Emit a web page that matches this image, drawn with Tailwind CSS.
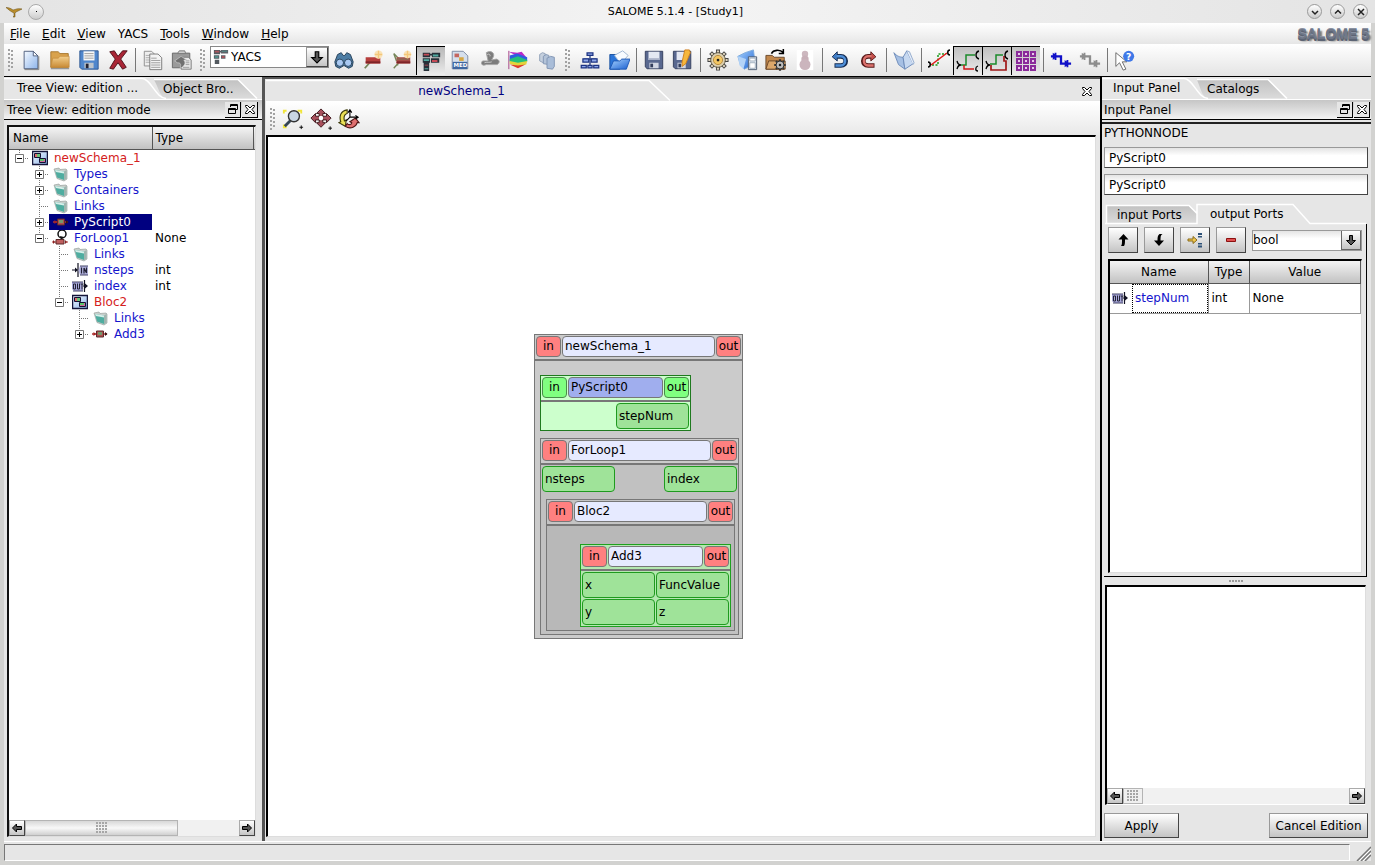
<!DOCTYPE html>
<html lang="en">
<head>
<meta charset="utf-8">
<title>SALOME 5.1.4 - [Study1]</title>
<script src="https://cdn.jsdelivr.net/npm/@tailwindcss/browser@4"></script>
</head>
<body class="relative flex h-screen flex-col overflow-hidden bg-[#e6e6e6] font-['DejaVu_Sans',sans-serif] text-xs leading-4 text-black">

<svg class="absolute size-0" aria-hidden="true">
  <defs>
    <linearGradient id="gBlue" x1="0" y1="0" x2="1" y2="1"><stop offset="0" stop-color="#f4f9ff"/><stop offset="1" stop-color="#8db4ea"/></linearGradient>
    <linearGradient id="gFolder" x1="0" y1="0" x2="0" y2="1"><stop offset="0" stop-color="#f3cf8c"/><stop offset="1" stop-color="#c98b36"/></linearGradient>
    <linearGradient id="gSky" x1="0" y1="0" x2="1" y2="1"><stop offset="0" stop-color="#a9d4ff"/><stop offset="1" stop-color="#1a5fd0"/></linearGradient>
    <linearGradient id="gTab" x1="0" y1="0" x2="0" y2="1"><stop offset="0" stop-color="#c2c2c2"/><stop offset="1" stop-color="#dadada"/></linearGradient>
    <pattern id="dots" width="3" height="4" patternUnits="userSpaceOnUse"><rect width="2" height="2" fill="#9a9a9a"/></pattern>
    <pattern id="cells" width="3" height="3" patternUnits="userSpaceOnUse"><rect width="2" height="2" fill="#a6a6a6"/></pattern>

    <symbol id="t-line" viewBox="0 0 20 16"><path d="M10.500 0V16M12 8.500H20" stroke="#777" stroke-dasharray="1 1" fill="none"/></symbol>
    <symbol id="t-plus" viewBox="0 0 20 16"><path d="M10.500 0V16M12 8.500H20" stroke="#777" stroke-dasharray="1 1" fill="none"/><path d="M6.500 4.500h8v8h-8z" fill="#fff" stroke="#777"/><path d="M8 8.500h5M10.500 6v5" stroke="#000"/></symbol>
    <symbol id="t-plusend" viewBox="0 0 20 16"><path d="M10.500 0V9M12 8.500H20" stroke="#777" stroke-dasharray="1 1" fill="none"/><path d="M6.500 4.500h8v8h-8z" fill="#fff" stroke="#777"/><path d="M8 8.500h5M10.500 6v5" stroke="#000"/></symbol>
    <symbol id="t-minus" viewBox="0 0 20 16"><path d="M10.500 0V9M12 8.500H20" stroke="#777" stroke-dasharray="1 1" fill="none"/><path d="M6.500 4.500h8v8h-8z" fill="#fff" stroke="#777"/><path d="M8 8.500h5" stroke="#000"/></symbol>

    <symbol id="i-bloc" viewBox="0 0 16 16"><path d="M.500 1.500h15v13H.500z" fill="url(#gBlue)" stroke="#15153a" stroke-width="1.500"/><path d="M2.500 3.500h6v4h-6z" fill="#e06c6c" stroke="#113"/><path d="M5 4h3v3H5z" fill="#6cc47a"/><path d="M7.500 8.500h6v4h-6z" fill="#d06c9c" stroke="#113"/><path d="M8 9h4v2H8z" fill="#5cc46a"/></symbol>
    <symbol id="i-folder" viewBox="0 0 16 16"><path d="M1 3l5-1 1 1.500 6-.500 1 1v9l-3 2-7-2.500z" fill="#c9cfcc" stroke="#8d9894" stroke-width=".6"/><path d="M2 4l9 1.500V14l-7-2.500z" fill="#4fada0"/><path d="M2 4l9 1.500v2L3 6z" fill="#d7efea"/><path d="M11 5.500l2.500-1.500v8.500L11 14.500z" fill="#9fb5af"/></symbol>
    <symbol id="i-node" viewBox="0 0 16 16"><path d="M0 8h4M12 8h3" stroke="#a33" stroke-width="1.300"/><path d="M1.500 6L4 8l-2.500 2z" fill="#a22"/><path d="M13 6l2.500 2-2.500 2z" fill="#311"/><path d="M4.500 5h7v6h-7z" fill="#b05050" stroke="#5a2b2b"/><path d="M6 6h4v3H6z" fill="#74996e"/></symbol>
    <symbol id="i-loop" viewBox="0 0 16 16"><circle cx="10" cy="4" r="4" fill="none" stroke="#111" stroke-width="1.500"/><path d="M8 6l4 1-3 3z" fill="#111"/><path d="M0 12h4M13 12h3" stroke="#a33"/><path d="M4 9.500h8v4.500H4z" fill="#c06060" stroke="#5a2b2b"/><path d="M1 10l2 2-2 2zM13 10l2 2-2 2z" fill="#822"/></symbol>
    <symbol id="i-in" viewBox="0 0 16 16"><path d="M0 8h5M6 1v14" stroke="#112" stroke-width="1.200"/><path d="M3 5.500L6 8l-3 2.500z" fill="#112"/><path d="M8 4h8v9H8L6.500 8.500z" fill="#b4b4e0"/><path d="M9.500 5.500v6M12 11.500V6l2.500 5V5.500" stroke="#223" stroke-width="1.200" fill="none"/><path d="M8 13h8M8 4h8" stroke="#446"/></symbol>
    <symbol id="i-out" viewBox="0 0 16 16"><path d="M0 4h11v9H2L0 11z" fill="#a8a8dc"/><path d="M1.500 6h2v5h-2zM5.500 5.500V11h2V5.500M8.500 6h3M10 6v5.500" stroke="#223" fill="none"/><path d="M1 13h10M0 4h11" stroke="#446"/><path d="M12.500 2v12M11 8h4" stroke="#112" stroke-width="1.200"/><path d="M13 5.500L16 8l-3 2.500z" fill="#112"/></symbol>
    <symbol id="i-close" viewBox="0 0 12 12"><path d="M1.500 2.500h2L6 5l2.500-2.500h2v1L8 6.500l2.500 3v1h-2L6 8l-2.500 2.500h-2v-1l2.500-3-2.500-3z" fill="#fff" stroke="#000"/></symbol>
    <symbol id="i-float" viewBox="0 0 12 12"><path d="M3.500 1.500h7v5h-2M3.500 1.500V4M3 2.500h8M1.500 5.500h7v5h-7zM1 6.500h8" fill="none" stroke="#000"/></symbol>
    <symbol id="i-left" viewBox="0 0 12 12"><path d="M1.500 6l4-4V4.500H10.500v3H5.500V10z" fill="#555" stroke="#000"/></symbol>
    <symbol id="i-right" viewBox="0 0 12 12"><path d="M10.500 6l-4-4V4.500H1.500v3h5V10z" fill="#555" stroke="#000"/></symbol>
    <symbol id="i-down" viewBox="0 0 12 12"><path d="M6 11L1.500 6.500h3V1.500h3v5h3z" fill="#555" stroke="#000"/></symbol>
    <symbol id="i-grip" viewBox="0 0 6 22"><path d="M0 0h2v2H0zM3 1h2v2H3zM0 4h2v2H0zM3 5h2v2H3zM0 8h2v2H0zM3 9h2v2H3zM0 12h2v2H0zM3 13h2v2H3zM0 16h2v2H0zM3 17h2v2H3zM0 20h2v2H0z" fill="#a2a2a2"/></symbol>
    <symbol id="i-gear" viewBox="0 0 24 24"><g stroke="#444" stroke-width="4.400"><path d="M12 .500v23M.500 12h23M3.900 3.900l16.200 16.200M20.100 3.900L3.900 20.100"/></g><g stroke="#ddd3bd" stroke-width="2.400"><path d="M12 1.500v21M1.500 12h21M4.600 4.600l14.800 14.800M19.400 4.600L4.600 19.400"/></g><circle cx="12" cy="12" r="8" fill="#ddd0b0" stroke="#55503f"/><circle cx="12" cy="12" r="5" fill="#f3c763" stroke="#b58a3c"/><circle cx="12" cy="12" r="1.500" fill="#222"/></symbol>
    <symbol id="i-graygear" viewBox="0 0 24 24"><g stroke="#333" stroke-width="4.400"><path d="M12 .500v23M.500 12h23M3.900 3.900l16.200 16.200M20.100 3.900L3.900 20.100"/></g><circle cx="12" cy="12" r="8" fill="#bbb" stroke="#333" stroke-width="2"/><circle cx="12" cy="12" r="2.500" fill="#222"/></symbol>
    <symbol id="i-modules" viewBox="0 0 18 18"><path d="M1 1h7v5H1zM1 7h6v4H1zM2 12h5v5H2zM7 2h3v2H7z" fill="#53595f"/><path d="M9 1h8v4H9zM9 7h5v4H9z" fill="#5f6268"/><path d="M2 2h5v2H2zM10 8h3v2h-3z" fill="#a9535b"/><path d="M2 8h4v2H2zM10 2h6v1h-6z" fill="#4f8a86"/></symbol>
  </defs>
</svg>

<!-- Window title bar -->
<header class="flex h-[23px] shrink-0 items-center bg-linear-to-r from-[#e4e4e4] via-[#f4f4f4] to-[#e4e4e4] px-1">
  <div class="flex w-[44px] items-center gap-1.5">
    <svg class="ml-0.5 size-4" viewBox="0 0 16 16"><path d="M0 3.500c3 0 5 1 7 2.500l2-.500c2-1 4-1 7-.500-2 1-4 2-6 3l-1 1v4H7l1-1V9L6 8C4 7 2 5 0 3.500z" fill="#b98d2c" stroke="#65480b" stroke-width=".5"/></svg>
    <button class="flex size-4 items-center justify-center rounded-full border border-[#aaa] bg-linear-to-b from-white to-[#ccc]" aria-label="Menu"><span class="size-px bg-black"></span></button>
  </div>
  <h1 class="flex-1 text-center text-[11px]">SALOME 5.1.4 - [Study1]</h1>
  <div class="flex w-[68px] items-center justify-end gap-2 pr-[3px]">
    <button aria-label="Minimize" class="flex size-[15px] items-center justify-center rounded-full border border-[#999] bg-linear-to-b from-white to-[#ccc]"><svg class="size-3" viewBox="0 0 12 12"><path d="M3 5l3 3 3-3" fill="none" stroke="#222" stroke-width="1.500"/></svg></button>
    <button aria-label="Maximize" class="flex size-[15px] items-center justify-center rounded-full border border-[#999] bg-linear-to-b from-white to-[#ccc]"><svg class="size-3" viewBox="0 0 12 12"><path d="M3 7.500l3-3 3 3" fill="none" stroke="#222" stroke-width="1.500"/></svg></button>
    <button aria-label="Close" class="flex size-[15px] items-center justify-center rounded-full border border-[#999] bg-linear-to-b from-white to-[#ccc]"><svg class="size-3" viewBox="0 0 12 12"><path d="M3 3l6 6M9 3l-6 6" fill="none" stroke="#222" stroke-width="1.500"/></svg></button>
  </div>
</header>

<div class="flex min-h-0 flex-1 flex-col border-x-4 border-b-4 border-t-0 border-[#d2d2d0]">

<!-- Menu bar -->
<nav class="flex h-[21px] shrink-0 items-center bg-linear-to-b from-white to-[#e6e6e6] pl-1.5 pr-0.5">
  <div class="flex flex-1 gap-3 text-xs">
    <button><u>F</u>ile</button><button><u>E</u>dit</button><button><u>V</u>iew</button><button>YACS</button><button><u>T</u>ools</button><button><u>W</u>indow</button><button><u>H</u>elp</button>
  </div>
  <span class="font-['Liberation_Sans',sans-serif] text-[14px] font-bold text-[#6f7787] [text-shadow:0_-1px_#8a92a2,0_1px_#5c6474,0_2px_#5c6474,2px_2px_2px_#555]">SALOME 5</span>
</nav>

<!-- Tool bar -->
<div class="flex h-[33px] shrink-0 items-center border-b border-black bg-linear-to-b from-white to-[#e4e4e4]" role="toolbar">
  <div class="flex w-3 shrink-0 items-center pl-1"><svg class="h-[22px] w-1.5"><use href="#i-grip"/></svg></div>
  <button aria-label="New" class="flex h-[29px] w-[29px] shrink-0 items-center justify-center"><svg class="size-[22px]" viewBox="0 0 24 24"><path d="M4.500 2.500h10l5 5v14h-15z" fill="url(#gBlue)" stroke="#4a5a78"/><path d="M14.500 2.500v5h5z" fill="#fff" stroke="#4a5a78"/><path d="M5 22.500h15.500V8" stroke="#777" fill="none"/></svg></button>
  <button aria-label="Open" class="flex h-[29px] w-[29px] shrink-0 items-center justify-center"><svg class="size-[22px]" viewBox="0 0 24 24"><path d="M2 3h8l2 2h9v15H2z" fill="#d9a24c" stroke="#a5752c"/><path d="M2 20l2-10h6l2-2h10v12z" fill="url(#gFolder)" stroke="#c08736" stroke-width=".7"/><path d="M2 21.500h20" stroke="#777"/></svg></button>
  <button aria-label="Save" class="flex h-[29px] w-[29px] shrink-0 items-center justify-center"><svg class="size-[22px]" viewBox="0 0 24 24"><path d="M2 2h20v20H4l-2-2z" fill="#4f86cc" stroke="#2c5590"/><path d="M6 2.500h12v10H6z" fill="#f7f7f7"/><path d="M7 5h10M7 7.500h10M7 10h10" stroke="#999"/><path d="M7 15h10v6H7z" fill="#bcc4cc"/><path d="M8.500 16h3v5h-3z" fill="#223"/></svg></button>
  <button aria-label="Delete" class="flex h-[29px] w-[29px] shrink-0 items-center justify-center"><svg class="size-[22px]" viewBox="0 0 24 24"><path d="M3 3l5-1 4 6 5-6 5 0-7 9 6 9-4 2-5-7-5 7-4-1 6-10z" fill="#a92636" stroke="#4c1018"/></svg></button>
  <div class="flex w-1.5 shrink-0 justify-center"><span class="h-6 w-px bg-[#777]"></span></div>
  <button aria-label="Copy" class="flex h-[29px] w-[29px] shrink-0 items-center justify-center"><svg class="size-[22px]" viewBox="0 0 24 24"><path d="M2.500 2.500h8l3 3v13h-11z" fill="#eee" stroke="#8a8a8a"/><path d="M4 7h6M4 9.500h6M4 12h6M4 14.500h6" stroke="#aaa"/><path d="M8.500 5.500h9l4 4v13h-13z" fill="#f3f3f3" stroke="#777"/><path d="M10 10h6M10 12.500h10M10 15h10M10 17.500h10M10 20h10" stroke="#999"/></svg></button>
  <button aria-label="Paste" class="flex h-[29px] w-[29px] shrink-0 items-center justify-center"><svg class="size-[22px]" viewBox="0 0 24 24"><path d="M1.500 4.500h19v16h-19z" fill="#9a9a9a" stroke="#666"/><path d="M7 5l2-3h6l1 3z" fill="#ccc" stroke="#777"/><path d="M11 9h8l3 3v10H11z" fill="#e8e8e8" stroke="#777"/><path d="M4 13l7-5 6 4-3 0c3 4 0 7-4 9 1-4 1-6-3-6z" fill="#707070" stroke="#ddd" stroke-width=".6"/><path d="M16 13h4M16 15h4M16 17h4M13 20h7" stroke="#999"/></svg></button>
  <div class="flex w-3.5 shrink-0 items-center justify-center"><svg class="h-[22px] w-1.5"><use href="#i-grip"/></svg></div>
  <label class="mb-1.5 flex h-[22px] w-[119px] shrink-0 items-center border border-[#888] bg-white">
    <svg class="ml-0.5 size-4"><use href="#i-modules"/></svg>
    <select aria-label="Module" class="h-full w-[77px] appearance-none pl-0.5 text-xs"><option>YACS</option></select>
    <span class="flex h-full flex-1 items-center justify-center border border-[#444] border-t-[#999] border-l-[#999] bg-linear-to-b from-white to-[#c4c4c4]"><svg class="size-3.5"><use href="#i-down"/></svg></span>
  </label>
  <button aria-label="Find" class="flex h-[29px] w-[29px] shrink-0 items-center justify-center"><svg class="size-[22px]" viewBox="0 0 24 24"><path d="M5 6l4-2 2 3h2l2-3 4 2 3 8-1 5-4 2-5-3-5 3-4-2-1-5z" fill="#4d7da4" stroke="#223c55"/><circle cx="7.500" cy="15" r="4" fill="#a9c9f2" stroke="#223c55"/><circle cx="16.500" cy="15" r="4" fill="#a9c9f2" stroke="#223c55"/></svg></button>
  <button aria-label="Geometry" class="flex h-[29px] w-[29px] shrink-0 items-center justify-center"><svg class="size-[22px]" viewBox="0 0 24 24"><path d="M3 21l8-9" stroke="#758558" stroke-width="2"/><path d="M4 9h16v7H4z" fill="#b63e3c"/><path d="M4 14.500h16" stroke="#7e2428" stroke-width="2"/><circle cx="18" cy="6" r="4.500" fill="#fae3b8"/><path d="M18 2v8M14 6h8" stroke="#f4c77a" stroke-width="1.500"/></svg></button>
  <button aria-label="Mesh" class="flex h-[29px] w-[29px] shrink-0 items-center justify-center"><svg class="size-[22px]" viewBox="0 0 24 24"><path d="M3 21l8-9M3 5l6 6-2 7M3 5l3 8" stroke="#758558" stroke-width="1.500" fill="none"/><path d="M6 9h15v7H6z" fill="#a84a46"/><path d="M6 11h14" stroke="#7c7c5c"/><path d="M6 14.500h15" stroke="#7e2428" stroke-width="2"/><circle cx="18" cy="6" r="4" fill="#fae3b8"/><path d="M18 2v8M14 6h8" stroke="#f4c77a" stroke-width="1.500"/></svg></button>
  <button aria-label="YACS module" aria-pressed="true" class="flex h-[29px] w-[29px] shrink-0 items-center justify-center border-l border-t border-black bg-linear-to-b from-[#b8b8b8] to-[#ececec]"><svg class="size-[22px]" viewBox="0 0 24 24"><path d="M3 3h8v5H3zM13 3h9v5h-9zM3 9h8v5H3zM12 9h9v5h-9zM4 14h6v4H4zM4 18h6v5H4zM9 4h5v2H9z" fill="#263039"/><path d="M4 4h6v2H4zM13 11h6v2h-6zM5 16h4v1H5z" fill="#c54a55"/><path d="M14 5h6v2h-6zM4 10h6v2H4zM5 20h4v1H5z" fill="#4faaa0"/></svg></button>
  <button aria-label="Med" class="flex h-[29px] w-[29px] shrink-0 items-center justify-center"><svg class="size-[22px]" viewBox="0 0 24 24"><path d="M3.500 2.500h12l5 5v14h-17z" fill="#d5dfec" stroke="#7887a0"/><path d="M6 5h5v4H6z" fill="#c46660"/><path d="M11 9h5v4h-5z" fill="#d6a641"/><path d="M4 14h16v8H4z" fill="#3f66a0"/><text x="5" y="20" font-family="DejaVu Sans" font-size="6" font-weight="bold" fill="#fff">MED</text></svg></button>
  <button aria-label="Light" class="flex h-[29px] w-[29px] shrink-0 items-center justify-center"><svg class="size-[22px]" viewBox="0 0 24 24"><path d="M9 4c5-3 9 0 8 4l-2 4 5-1c4 1 4 4 1 6H9c-4 2-7-1-4-4h6z" fill="#7c7c7c" stroke="#a5a5a5"/><path d="M10 6c2-1 4 0 3 2M7 15c2-1 6 0 8-1" stroke="#ccc" fill="none"/></svg></button>
  <button aria-label="Visualization" class="flex h-[29px] w-[29px] shrink-0 items-center justify-center"><svg class="size-[22px]" viewBox="0 0 24 24"><path d="M2 2v20" stroke="#a03a80"/><path d="M2 3l9 1 5-1 5 6v4z" fill="#b82ac8"/><path d="M3 7l8-2 11 4v4H3z" fill="#2f5de0"/><path d="M3 11l9-3 10 4v2l-10 2-9-2z" fill="#23c07a"/><path d="M3 13l9 2 10-2-1 4-9 2-9-3z" fill="#e2d43b"/><path d="M3 17l9 1 8-1-8 4z" fill="#df3b2b"/></svg></button>
  <button aria-label="Hexa" class="flex h-[29px] w-[29px] shrink-0 items-center justify-center"><svg class="size-[22px]" viewBox="0 0 24 24"><path d="M4 6l3-2 3 1v8l-2 2-4-2z" fill="#c5d0de" stroke="#8fa0b8"/><path d="M8 8l3-2 3 1v10l-6-1z" fill="#b3c3d8" stroke="#8094b2"/><path d="M12 10l4-2 4 1v10l-2 3-6-1z" fill="#a9bdd8" stroke="#8094b2"/></svg></button>
  <div class="flex w-3.5 shrink-0 items-center justify-center"><svg class="h-[22px] w-1.5"><use href="#i-grip"/></svg></div>
  <button aria-label="New schema" class="flex h-[29px] w-[29px] shrink-0 items-center justify-center"><svg class="size-5" viewBox="0 0 24 24"><path d="M12 6v5M5 14v-3h14v3M12 11v8" stroke="#223a80" stroke-width="1.500" fill="none"/><path d="M8.500 3.500h7v3h-7zM3.500 10.500h7v4h-7zM13.500 10.500h7v4h-7zM1.500 18.500h6v3h-6zM9.500 18.500h5v3h-5zM16.500 18.500h6v3h-6z" fill="#8fa8e8" stroke="#1d3382" stroke-width="1.500"/></svg></button>
  <button aria-label="Import schema" class="flex h-[29px] w-[29px] shrink-0 items-center justify-center"><svg class="size-[22px]" viewBox="0 0 24 24"><path d="M2 6h9l2 2v14H2z" fill="#2b75d8" stroke="#184f9e"/><path d="M7 7l9-5 6 5-8 9z" fill="#f8fbff" stroke="#9db4d0"/><path d="M2 22l4-9h7l2-2h9l-4 11z" fill="url(#gSky)" stroke="#1c57b4"/></svg></button>
  <div class="flex w-1.5 shrink-0 justify-center"><span class="h-6 w-px bg-[#777]"></span></div>
  <button aria-label="Save schema" class="flex h-[29px] w-[29px] shrink-0 items-center justify-center"><svg class="size-[22px]" viewBox="0 0 24 24"><path d="M2.500 2.500h19v19h-17l-2-2z" fill="#59688f" stroke="#323d5c"/><path d="M6 3h12v9H6z" fill="#e4e8f2"/><path d="M6 11h12" stroke="#aab2c8" stroke-width="2"/><path d="M7 15h10v6H7z" fill="#d0d5e2"/><path d="M8 16h3v4H8z" fill="#323d5c"/></svg></button>
  <button aria-label="Save schema as" class="flex h-[29px] w-[29px] shrink-0 items-center justify-center"><svg class="size-[22px]" viewBox="0 0 24 24"><path d="M1.500 2.500h19v19h-17l-2-2z" fill="#59688f" stroke="#323d5c"/><path d="M5 3h12v9H5z" fill="#e4e8f2"/><path d="M6 15h9v6H6z" fill="#d0d5e2"/><path d="M7 16h3v4H7z" fill="#323d5c"/><path d="M14 1l5 0 1 3-5 12-4 3 0-5z" fill="#f6b73c" stroke="#cf7f1d"/></svg></button>
  <div class="flex w-1.5 shrink-0 justify-center"><span class="h-6 w-px bg-[#777]"></span></div>
  <button aria-label="Run" class="flex h-[29px] w-[29px] shrink-0 items-center justify-center"><svg class="size-[22px]"><use href="#i-gear"/></svg></button>
  <button aria-label="Load run state" class="flex h-[29px] w-[29px] shrink-0 items-center justify-center"><svg class="size-[22px]" viewBox="0 0 24 24"><path d="M2 8l8-4 9-3 2 15-12 6-4-4z" fill="url(#gSky)" stroke="#7aa9dc"/><path d="M2 8l9 3-3 11-4-4z" fill="#b3d3f7"/><path d="M13.500 8.500h9v14h-9z" fill="#dce4ee" stroke="#4a5a70"/><path d="M15 10h6v3h-6zM15 15h6v6h-6z" fill="#fff" stroke="#8494a8" stroke-width=".7"/></svg></button>
  <button aria-label="Load and run" class="relative flex h-[29px] w-[29px] shrink-0 items-center justify-center"><svg class="size-[22px]" viewBox="0 0 24 24"><path d="M1 7h7l2 2h11v13H1z" fill="#c1874c" stroke="#68462a"/><path d="M1 22l3-9h18v9z" fill="#dba76b" stroke="#68462a"/><path d="M7 5c2-4 9-5 13-1M20 0v5h-5" fill="none" stroke="#000" stroke-width="1.700"/></svg><svg class="absolute right-1 bottom-1 size-3"><use href="#i-graygear"/></svg></button>
  <button aria-label="Batch" class="flex h-[29px] w-[29px] shrink-0 items-center justify-center"><svg class="size-[22px]" viewBox="0 0 24 24"><path d="M3 1h18v22H3z" fill="#fff"/><circle cx="12" cy="5.500" r="3.500" fill="#cdb8bf"/><circle cx="12" cy="11" r="4" fill="#c8b0b8"/><circle cx="12" cy="17" r="6" fill="#cbb5bd"/></svg></button>
  <div class="flex w-1.5 shrink-0 justify-center"><span class="h-6 w-px bg-[#777]"></span></div>
  <button aria-label="Undo" class="flex h-[29px] w-[29px] shrink-0 items-center justify-center"><svg class="size-[22px]" viewBox="0 0 24 24"><path d="M7 8h6c7 0 7 10 0 10H6" fill="none" stroke="#152c52" stroke-width="5"/><path d="M9 3L3.500 8.500 9 13z" fill="#3f7bc4" stroke="#152c52"/><path d="M8 8h5c6 0 6 10 0 10H7" fill="none" stroke="#4f8fd8" stroke-width="2.800"/></svg></button>
  <button aria-label="Redo" class="flex h-[29px] w-[29px] shrink-0 items-center justify-center"><svg class="size-[22px]" viewBox="0 0 24 24"><path d="M16 8h-5c-7 0-7 10 0 10h7" fill="none" stroke="#571a1a" stroke-width="5"/><path d="M14 3l5.500 5.500L14 13z" fill="#c44e4a" stroke="#571a1a"/><path d="M15 8h-4c-6 0-6 10 0 10h6" fill="none" stroke="#dc716c" stroke-width="2.800"/></svg></button>
  <div class="flex w-1.5 shrink-0 justify-center"><span class="h-6 w-px bg-[#777]"></span></div>
  <button aria-label="Display" class="flex h-[29px] w-[29px] shrink-0 items-center justify-center"><svg class="size-[22px]" viewBox="0 0 24 24"><path d="M1 4c3 4 7 5 10 5l2 13-7-5z" fill="#a6c0e4" stroke="#6a89b8"/><path d="M11 9l4-7 7 14-9 6z" fill="#c6d8f0" stroke="#6a89b8"/><path d="M15 2l3 1 5 12-1 2" fill="#e4ecf8" stroke="#8fa8cc"/></svg></button>
  <div class="flex w-1.5 shrink-0 justify-center"><span class="h-6 w-px bg-[#777]"></span></div>
  <button aria-label="Straight links" class="flex h-[29px] w-[29px] shrink-0 items-center justify-center"><svg class="size-6" viewBox="0 0 24 24"><path d="M5 17h6V6h8" fill="none" stroke="#1b9a1b" stroke-width="1.500" stroke-dasharray="2 1.500"/><path d="M4 17L20 5" stroke="#e01818" stroke-width="1.500"/><path d="M1 14c3 0 3 5 0 5M23 2c-3 0-3 5 0 5" fill="none" stroke="#000" stroke-width="1.500"/></svg></button>
  <button aria-label="Orthogonal links" aria-pressed="true" class="flex h-[29px] w-[29px] shrink-0 items-center justify-center border-l border-t border-black bg-linear-to-b from-[#c0c0c0] to-[#ececec]"><svg class="size-6" viewBox="0 0 24 24"><path d="M5 16h5V6h9" fill="none" stroke="#1b8a2b" stroke-width="1.500"/><path d="M8 16v4h10" fill="none" stroke="#d01818" stroke-width="1.500"/><path d="M1 12c1 4 4 4 4 4s-3 0-4 4M23 2c-4 1-4 7 0 8M22 17c-3 1-3 5 0 5" fill="none" stroke="#000" stroke-width="1.300"/></svg></button>
  <button aria-label="Avoid obstacles" aria-pressed="true" class="flex h-[29px] w-[29px] shrink-0 items-center justify-center border-l border-t border-black bg-linear-to-b from-[#c0c0c0] to-[#ececec]"><svg class="size-6" viewBox="0 0 24 24"><path d="M5 15h6V6h7" fill="none" stroke="#1b8a2b" stroke-width="1.500"/><path d="M6 16v5h15v-9h-2V7" fill="none" stroke="#a01818" stroke-width="1.700"/><path d="M1 12c1 4 4 4 4 4s-3 0-4 4M23 2c-4 1-4 7 0 8" fill="none" stroke="#000" stroke-width="1.300"/></svg></button>
  <button aria-label="Simplify links" aria-pressed="true" class="flex h-[29px] w-[29px] shrink-0 items-center justify-center border-l border-t border-black bg-linear-to-b from-[#c0c0c0] to-[#ececec]"><svg class="size-6" viewBox="0 0 24 24"><path d="M3 3h4v4H3zM10 3h4v4h-4zM17 3h4v4h-4zM3 10h4v4H3zM10 10h4v4h-4zM17 10h4v4h-4zM3 17h4v4H3zM10 17h4v4h-4zM17 17h4v4h-4z" fill="#e8c8ec" stroke="#8a2a9a" stroke-width="2"/></svg></button>
  <div class="flex w-1.5 shrink-0 justify-center"><span class="h-6 w-px bg-[#777]"></span></div>
  <button aria-label="Force links" class="flex h-[29px] w-[29px] shrink-0 items-center justify-center"><svg class="size-[22px]" viewBox="0 0 24 24"><path d="M1 8h11v8h11" fill="none" stroke="#1010c8" stroke-width="2.500"/><path d="M3 4l5 4-5 4zM16 12l5 4-5 4zM5 4h2v8H5zM18 12h2v8h-2z" fill="#1010c8"/></svg></button>
  <button aria-label="Release links" class="flex h-[29px] w-[29px] shrink-0 items-center justify-center"><svg class="size-[22px]" viewBox="0 0 24 24"><path d="M1 8h11v8h11" fill="none" stroke="#8d8d8d" stroke-width="2.500"/><path d="M3 4l5 4-5 4zM16 12l5 4-5 4zM5 4h2v8H5zM18 12h2v8h-2z" fill="#8d8d8d"/></svg></button>
  <div class="flex w-1.5 shrink-0 justify-center"><span class="h-6 w-px bg-[#777]"></span></div>
  <button aria-label="What's this" class="flex h-[29px] w-[29px] shrink-0 items-center justify-center"><svg class="size-[22px]" viewBox="0 0 24 24"><path d="M2 4v15l4-4 4 8 3-1-4-8h5z" fill="#fff" stroke="#666"/><circle cx="16" cy="8" r="6" fill="#3f78e8"/><text x="13" y="12" font-family="DejaVu Sans" font-size="10" font-weight="bold" fill="#fff">?</text></svg></button>
</div>

<main class="flex min-h-0 flex-1">

  <!-- Tree dock -->
  <section class="flex w-[258px] shrink-0 flex-col">
    <div class="relative flex h-[23px] shrink-0 items-center border-b border-white">
      <svg class="absolute left-0 top-0 h-[23px] w-[258px]" viewBox="0 0 258 23"><path d="M150 3h84l18 18h-90c-6 0-8-12-12-18z" fill="url(#gTab)"/><path d="M0 1.500h138c9 0 14 20 24 20M150 2.500h84l19 19" fill="none" stroke="#fff" stroke-width="1.500"/></svg>
      <button class="relative ml-[13px] w-[146px] text-left">Tree View: edition ...</button>
      <button class="relative pt-0.5 text-left">Object Bro..</button>
    </div>
    <div class="flex h-5 shrink-0 items-center border-b border-black bg-linear-to-b from-[#c6c6c6] to-[#f2f2f2] pl-[3px] pr-1">
      <h2 class="flex-1">Tree View: edition mode</h2>
      <button aria-label="Float" class="flex h-4 w-4 items-center justify-center border-b border-r border-black bg-[#e6e6e6]"><svg class="size-3"><use href="#i-float"/></svg></button>
      <button aria-label="Close dock" class="ml-px flex h-4 w-4 items-center justify-center border-b border-r border-black bg-[#e6e6e6]"><svg class="size-3"><use href="#i-close"/></svg></button>
    </div>
    <div class="ml-[3px] mr-1.5 mt-[5px] mb-1 flex min-h-0 flex-1 flex-col border-2 border-b border-r border-[#111] border-b-[#ddd] border-r-[#ddd] bg-white">
      <table class="w-full table-fixed border-collapse">
        <colgroup><col class="w-[143px]"><col class="w-[101px]"><col></colgroup>
        <thead><tr class="h-[22px] bg-linear-to-b from-[#f4f4f4] to-[#c2c2c2] text-left"><th class="border-b border-r border-[#555] pl-1 font-normal">Name</th><th class="border-b border-r border-[#555] pl-[3px] font-normal">Type</th><th class="border-b border-[#555] p-0"></th></tr></thead>
        <tbody class="whitespace-nowrap text-[#1414cc]">
          <tr class="h-4"><td class="p-0"><div class="flex h-4"><svg class="h-4 w-5"><use href="#t-minus"/></svg><svg class="ml-[3px] mr-1.5 size-4"><use href="#i-bloc"/></svg><span class="text-[#d42020]">newSchema_1</span></div></td><td class="p-0"></td><td class="p-0"></td></tr>
          <tr class="h-4"><td class="p-0"><div class="flex h-4 pl-5"><svg class="h-4 w-5"><use href="#t-plus"/></svg><svg class="ml-1 mr-[5px] size-4"><use href="#i-folder"/></svg>Types</div></td><td class="p-0"></td><td class="p-0"></td></tr>
          <tr class="h-4"><td class="p-0"><div class="flex h-4 pl-5"><svg class="h-4 w-5"><use href="#t-plus"/></svg><svg class="ml-1 mr-[5px] size-4"><use href="#i-folder"/></svg>Containers</div></td><td class="p-0"></td><td class="p-0"></td></tr>
          <tr class="h-4"><td class="p-0"><div class="flex h-4 pl-5"><svg class="h-4 w-5"><use href="#t-line"/></svg><svg class="ml-1 mr-[5px] size-4"><use href="#i-folder"/></svg>Links</div></td><td class="p-0"></td><td class="p-0"></td></tr>
          <tr class="h-4"><td class="p-0"><div class="flex h-4 pl-5"><svg class="h-4 w-5"><use href="#t-plus"/></svg><div class="flex flex-1 bg-[#000080] text-white"><svg class="ml-1 mr-[5px] size-4"><use href="#i-node"/></svg>PyScript0</div></div></td><td class="p-0"></td><td class="p-0"></td></tr>
          <tr class="h-4"><td class="p-0"><div class="flex h-4 pl-5"><svg class="h-4 w-5"><use href="#t-minus"/></svg><svg class="ml-[3px] mr-1.5 size-4"><use href="#i-loop"/></svg>ForLoop1</div></td><td class="p-0 pl-[3px] text-black">None</td><td class="p-0"></td></tr>
          <tr class="h-4"><td class="p-0"><div class="flex h-4 pl-10"><svg class="h-4 w-5"><use href="#t-line"/></svg><svg class="ml-1 mr-[5px] size-4"><use href="#i-folder"/></svg>Links</div></td><td class="p-0"></td><td class="p-0"></td></tr>
          <tr class="h-4"><td class="p-0"><div class="flex h-4 pl-10"><svg class="h-4 w-5"><use href="#t-line"/></svg><svg class="ml-[3px] mr-1.5 size-4"><use href="#i-in"/></svg>nsteps</div></td><td class="p-0 pl-[3px] text-black">int</td><td class="p-0"></td></tr>
          <tr class="h-4"><td class="p-0"><div class="flex h-4 pl-10"><svg class="h-4 w-5"><use href="#t-line"/></svg><svg class="ml-[3px] mr-1.5 size-4"><use href="#i-out"/></svg>index</div></td><td class="p-0 pl-[3px] text-black">int</td><td class="p-0"></td></tr>
          <tr class="h-4"><td class="p-0"><div class="flex h-4 pl-10"><svg class="h-4 w-5"><use href="#t-minus"/></svg><svg class="ml-[3px] mr-1.5 size-4"><use href="#i-bloc"/></svg><span class="text-[#d42020]">Bloc2</span></div></td><td class="p-0"></td><td class="p-0"></td></tr>
          <tr class="h-4"><td class="p-0"><div class="flex h-4 pl-[60px]"><svg class="h-4 w-5"><use href="#t-line"/></svg><svg class="ml-1 mr-[5px] size-4"><use href="#i-folder"/></svg>Links</div></td><td class="p-0"></td><td class="p-0"></td></tr>
          <tr class="h-4"><td class="p-0"><div class="flex h-4 pl-[60px]"><svg class="h-4 w-5"><use href="#t-plusend"/></svg><svg class="ml-[3px] mr-1.5 size-4"><use href="#i-node"/></svg>Add3</div></td><td class="p-0"></td><td class="p-0"></td></tr>
        </tbody>
      </table>
      <div class="mt-auto flex h-4 bg-[#f1f1f1]">
        <button aria-label="Scroll left" class="flex w-4 items-center justify-center border border-[#444] border-l-[#aaa] border-t-[#aaa] bg-linear-to-b from-white to-[#c4c4c4]"><svg class="size-3 shrink-0"><use href="#i-left"/></svg></button>
        <div class="flex w-[153px] items-center justify-center border border-[#b4b4b4] bg-linear-to-b from-[#d8d8d8] via-[#f8f8f8] to-[#d0d0d0]"><svg class="h-3 w-3"><rect width="12" height="12" fill="url(#cells)"/></svg></div>
        <button aria-label="Scroll right" class="ml-auto flex w-4 items-center justify-center border border-[#444] border-l-[#aaa] border-t-[#aaa] bg-linear-to-b from-white to-[#c4c4c4]"><svg class="size-3 shrink-0"><use href="#i-right"/></svg></button>
      </div>
    </div>
  </section>

  <!-- Schema view -->
  <section class="flex min-w-0 flex-1 flex-col border-l-[3px] border-t-2 border-[#555] pl-px">
    <div class="relative flex h-[23px] shrink-0 items-center border-b border-white pr-[7px] pt-0.5">
      <svg class="absolute left-0 top-0 h-[23px] w-[420px]" viewBox="0 0 420 23"><path d="M0 1.500h383l21 20" fill="none" stroke="#fff" stroke-width="1.500"/></svg>
      <button class="relative w-[391px] text-center text-[#000080]">newSchema_1</button>
      <button aria-label="Close view" class="ml-auto"><svg class="size-3"><use href="#i-close"/></svg></button>
    </div>
    <div class="flex h-[33px] shrink-0 items-center bg-linear-to-b from-white to-[#e8e8e8] pl-1" role="toolbar">
      <svg class="mr-0.5 h-[22px] w-1.5"><use href="#i-grip"/></svg>
      <button aria-label="Fit view" class="flex w-[29px] justify-center"><svg class="size-[22px]" viewBox="0 0 24 24"><path d="M2 6V3h3M17 3h4v3M2 18v3h3" fill="none" stroke="#f1e53a" stroke-width="2"/><path d="M9 14l-6 6" stroke="#345" stroke-width="3"/><circle cx="13" cy="9" r="6" fill="#c9d7e4" stroke="#333" stroke-width="1.500"/><path d="M19 21h4M21 19v4" stroke="#000"/></svg></button>
      <button aria-label="Pan" class="flex w-7 justify-center"><svg class="size-[22px]" viewBox="0 0 24 24"><path d="M12 1l5 5h-3v3h-4V6H7zM12 21l-5-5h3v-3h4v3h3zM1 11l5-5v3h4v4H6v3zM23 11l-5 5v-3h-4V9h4V6z" fill="#a8505c" stroke="#3a1418"/><circle cx="12" cy="11" r="2.500" fill="#fff"/><path d="M20 22h4M22 20v4" stroke="#000"/></svg></button>
      <button aria-label="Rotate" class="flex w-7 justify-center"><svg class="size-[22px]" viewBox="0 0 24 24"><path d="M10 2C3 3 1 9 3 15l-2 1 7 4 1-7-2 1c-1-4 0-7 3-8z" fill="#eadf55" stroke="#3d3a0c" stroke-width="1.200"/><path d="M8 20c6 4 12 0 13-4l2 0-4-5-6 4 2 1c0 2-3 3-5 1z" fill="#e07070" stroke="#501515" stroke-width="1.200"/><path d="M13 10V2M13 10h9M13 10l-4 4M11 5l2-3 2 3M19 8l3 2-3 2" stroke="#000" stroke-width="1.200" fill="none"/></svg></button>
    </div>
    <div class="relative mr-1 mb-1 min-h-0 flex-1 overflow-hidden border-b border-l-2 border-r border-t-2 border-black border-b-[#ddd] border-r-[#ddd] bg-white">
      <!-- Diagram nodes -->
      <div class="absolute left-[266px] top-[197px] h-[305px] w-[209px] border border-[#777] bg-[#cbcbcb]">
        <div class="flex h-[26px] gap-px border-b-2 border-[#777] p-px pb-0.5 leading-[18px]"><span class="w-[25px] rounded-sm border border-[#777] bg-[#ff8080] text-center">in</span><span class="flex-1 rounded-sm border border-[#777] bg-[#e6eaff] pl-0.5">newSchema_1</span><span class="w-[25px] rounded-sm border border-[#777] bg-[#ff8080] text-center">out</span></div>
        <div class="absolute left-[5px] top-10 h-14 w-[151px] border border-[#1f7a1f] bg-[#ccffcc]">
          <div class="flex h-[26px] gap-px border-b-2 border-[#777] p-px pb-0.5 leading-[18px]"><span class="w-[25px] rounded-sm border border-[#4a8a4a] bg-[#80ff80] text-center">in</span><span class="flex-1 rounded-sm border border-[#777] bg-[#a0aeee] pl-0.5">PyScript0</span><span class="w-[25px] rounded-sm border border-[#4a8a4a] bg-[#80ff80] text-center">out</span></div>
          <div class="flex justify-end p-px"><span class="h-[26px] w-[73px] rounded-sm border border-[#1f9a1f] bg-[#9fe399] pl-0.5 leading-6">stepNum</span></div>
        </div>
        <div class="absolute left-[5px] top-[103px] h-[197px] w-[199px] border border-[#777] bg-[#c1c1c1]">
          <div class="flex h-[26px] gap-px border-b-2 border-[#777] bg-[#cbcbcb] p-px pb-0.5 leading-[18px]"><span class="w-[25px] rounded-sm border border-[#777] bg-[#ff8080] text-center">in</span><span class="flex-1 rounded-sm border border-[#777] bg-[#e6eaff] pl-0.5">ForLoop1</span><span class="w-[25px] rounded-sm border border-[#777] bg-[#ff8080] text-center">out</span></div>
          <div class="flex justify-between p-px"><span class="h-[26px] w-[73px] rounded-sm border border-[#1f9a1f] bg-[#9fe399] pl-0.5 leading-6">nsteps</span><span class="h-[26px] w-[73px] rounded-sm border border-[#1f9a1f] bg-[#9fe399] pl-0.5 leading-6">index</span></div>
          <div class="absolute left-[5px] top-[60px] h-[132px] w-[189px] border border-[#777] bg-[#b8b8b8]">
            <div class="flex h-[26px] gap-px border-b-2 border-[#777] bg-[#c4c4c4] p-px pb-0.5 leading-[18px]"><span class="w-[25px] rounded-sm border border-[#777] bg-[#ff8080] text-center">in</span><span class="flex-1 rounded-sm border border-[#777] bg-[#e6eaff] pl-0.5">Bloc2</span><span class="w-[25px] rounded-sm border border-[#777] bg-[#ff8080] text-center">out</span></div>
            <div class="absolute left-[33px] top-11 h-[83px] w-[151px] border border-[#1fa01f] bg-[#b4e8b0]">
              <div class="flex h-[26px] gap-px border-b-2 border-[#777] p-px pb-0.5 leading-[18px]"><span class="w-[25px] rounded-sm border border-[#777] bg-[#ff8080] text-center">in</span><span class="flex-1 rounded-sm border border-[#777] bg-[#e6eaff] pl-0.5">Add3</span><span class="w-[25px] rounded-sm border border-[#777] bg-[#ff8080] text-center">out</span></div>
              <div class="grid grid-cols-2 gap-px p-px"><span class="h-[26px] rounded-sm border border-[#1f9a1f] bg-[#9fe399] pl-0.5 leading-6">x</span><span class="h-[26px] rounded-sm border border-[#1f9a1f] bg-[#9fe399] pl-0.5 leading-6">FuncValue</span><span class="h-[26px] rounded-sm border border-[#1f9a1f] bg-[#9fe399] pl-0.5 leading-6">y</span><span class="h-[26px] rounded-sm border border-[#1f9a1f] bg-[#9fe399] pl-0.5 leading-6">z</span></div>
            </div>
          </div>
        </div>
      </div>
    </div>
  </section>

  <!-- Input panel dock -->
  <section class="flex w-[271px] shrink-0 flex-col border-l-2 border-black">
    <div class="relative flex h-[23px] shrink-0 items-center border-b border-white">
      <svg class="absolute left-0 top-0 h-[23px] w-[258px]" viewBox="0 0 258 23"><path d="M95 3h71l17 18h-77c-6 0-8-12-11-18z" fill="url(#gTab)"/><path d="M0 1.500h82c9 0 14 20 24 20M95 2.500h71l19 19" fill="none" stroke="#fff" stroke-width="1.500"/></svg>
      <button class="relative ml-[11px] w-[94px] text-left">Input Panel</button>
      <button class="relative pt-0.5 text-left">Catalogs</button>
    </div>
    <div class="flex h-5 shrink-0 items-center border-b border-black bg-linear-to-b from-[#c6c6c6] to-[#f2f2f2] pl-0.5 pr-px">
      <h2 class="flex-1">Input Panel</h2>
      <button aria-label="Float" class="flex h-4 w-4 items-center justify-center border-b border-r border-black bg-[#e6e6e6]"><svg class="size-3"><use href="#i-float"/></svg></button>
      <button aria-label="Close dock" class="ml-px flex h-4 w-4 items-center justify-center border-b border-r border-black bg-[#e6e6e6]"><svg class="size-3"><use href="#i-close"/></svg></button>
    </div>
    <div class="mt-0.5 flex min-h-0 flex-1 flex-col border-t-2 border-[#222] pb-[3px] pl-0.5 pr-[3px]">
      <label for="nodename" class="mt-px mb-1.5">PYTHONNODE</label>
      <input id="nodename" value="PyScript0" class="mb-1.5 h-[21px] w-full shrink-0 border border-[#444] border-l-[#999] border-t-[#999] bg-white bg-linear-to-b from-[#e4e4e4] to-white to-40% px-1">
      <input aria-label="Label" value="PyScript0" class="h-[21px] w-full shrink-0 border border-[#444] border-l-[#999] border-t-[#999] bg-white bg-linear-to-b from-[#e4e4e4] to-white to-40% px-1">
      <div class="relative mt-2 flex h-[21px] shrink-0 items-center">
        <svg class="absolute left-0 top-0 h-[22px] w-[262px]" viewBox="0 0 262 22"><path d="M2 3h83l8 8v9H2z" fill="url(#gTab)"/><path d="M2.500 20.500V2.500H85l8 8M1 20.500h92V1.500h96l17 19h56" fill="none" stroke="#fff" stroke-width="1.500"/></svg>
        <button class="relative ml-[13px] w-[93px] pt-0.5 text-left">input Ports</button>
        <button class="relative">output Ports</button>
      </div>
      <div class="mr-px flex min-h-0 flex-[352_1_0%] flex-col border-b border-r border-black px-1 pb-[3px] pt-[3px]">
        <div class="flex h-[26px] shrink-0 items-center gap-1.5">
          <button aria-label="Up" class="flex h-[26px] w-[30px] items-center justify-center border border-[#444] border-l-[#999] border-t-[#999] bg-linear-to-b from-white to-[#c4c4c4]"><svg class="size-4" viewBox="0 0 16 16"><path d="M8.500 2l5 5.500H10c0 3 0 5-1 6.500H6c1-1 1-3 1-6.500H3.500z" fill="#000"/></svg></button>
          <button aria-label="Down" class="flex h-[26px] w-[30px] items-center justify-center border border-[#444] border-l-[#999] border-t-[#999] bg-linear-to-b from-white to-[#c4c4c4]"><svg class="size-4" viewBox="0 0 16 16"><path d="M8 14L3 8.500h3.500c0-3 0-5 2-6.500h3c-2 1-2 3-2 6.500H13z" fill="#000"/></svg></button>
          <button aria-label="Insert" class="flex h-[26px] w-[30px] items-center justify-center border border-[#444] border-l-[#999] border-t-[#999] bg-linear-to-b from-white to-[#c4c4c4]"><svg class="size-4" viewBox="0 0 16 16"><path d="M1 7h5V4.500L10 8l-4 3.500V9H1z" fill="#f0c850" stroke="#8a6a18"/><path d="M11 1h4v2h-4zM11 4h4v1.500h-4zM11 11h4v1.500h-4zM11 13.500h4v2h-4z" fill="#2e5278"/></svg></button>
          <button aria-label="Remove" class="flex h-[26px] w-[30px] items-center justify-center border border-[#444] border-l-[#999] border-t-[#999] bg-linear-to-b from-white to-[#c4c4c4]"><svg class="size-4" viewBox="0 0 16 16"><path d="M3.500 6.500h9v3h-9z" fill="#e05050" stroke="#8c1010"/></svg></button>
          <label class="flex h-[21px] flex-1 items-center border border-[#999] bg-white bg-linear-to-b from-[#e4e4e4] to-white to-40%"><select aria-label="Port type" class="h-full min-w-0 flex-1 appearance-none text-xs"><option>bool</option></select><span class="flex h-full w-5 items-center justify-center border-b border-l border-r border-[#666] bg-linear-to-b from-white to-[#c4c4c4]"><svg class="size-3"><use href="#i-down"/></svg></span></label>
        </div>
        <div class="mt-1.5 min-h-0 flex-1 border-b border-l-2 border-r border-t-2 border-black border-b-[#ddd] border-r-[#ddd] bg-white">
          <table class="w-full table-fixed border-collapse">
            <colgroup><col class="w-[98px]"><col class="w-[41px]"><col></colgroup>
            <thead><tr class="h-[22px] bg-linear-to-b from-[#f4f4f4] to-[#c2c2c2]"><th class="border-b border-r border-[#555] p-0 font-normal">Name</th><th class="border-b border-r border-[#555] p-0 font-normal">Type</th><th class="border-b border-r border-[#555] p-0 font-normal">Value</th></tr></thead>
            <tbody><tr class="h-[30px]"><td class="border-b border-r border-[#999] p-0"><div class="flex h-[29px] items-center"><svg class="mx-0.5 size-4"><use href="#i-out"/></svg><span class="ml-0.5 flex h-full flex-1 items-center border border-dotted border-black pl-0.5 text-[#1414cc]">stepNum</span></div></td><td class="border-b border-r border-[#999] p-0 pl-[3px]">int</td><td class="border-b border-r border-[#999] p-0 pl-[3px]">None</td></tr></tbody>
          </table>
        </div>
      </div>
      <div class="flex h-2 shrink-0 items-center justify-center"><svg class="h-0.5 w-[14px]"><rect width="14" height="2" fill="url(#dots)"/></svg></div>
      <div class="mr-0.5 ml-px flex min-h-0 flex-[220_1_0%] flex-col border-b border-l-2 border-r border-t-2 border-black border-b-white border-r-[#ddd] bg-white">
        <textarea aria-label="Details" class="block w-full flex-1 resize-none outline-none"></textarea>
        <div class="flex h-4 shrink-0 bg-[#f1f1f1]">
          <button aria-label="Scroll left" class="flex w-4 items-center justify-center border border-[#444] border-l-[#aaa] border-t-[#aaa] bg-linear-to-b from-white to-[#c4c4c4]"><svg class="size-3 shrink-0"><use href="#i-left"/></svg></button>
          <div class="flex w-5 items-center justify-center border border-[#b4b4b4] bg-[#f0f0f0]"><svg class="h-3 w-3"><rect width="12" height="12" fill="url(#cells)"/></svg></div>
          <button aria-label="Scroll right" class="ml-auto flex w-4 items-center justify-center border border-[#444] border-l-[#aaa] border-t-[#aaa] bg-linear-to-b from-white to-[#c4c4c4]"><svg class="size-3 shrink-0"><use href="#i-right"/></svg></button>
        </div>
      </div>
      <div class="mt-2 flex shrink-0 justify-between">
        <button class="h-[25px] w-[75px] border border-[#444] border-l-[#999] border-t-[#999] bg-linear-to-b from-white to-[#c4c4c4]">Apply</button>
        <button class="h-[25px] w-[99px] whitespace-nowrap border border-[#444] border-l-[#999] border-t-[#999] bg-linear-to-b from-white to-[#c4c4c4]">Cancel Edition</button>
      </div>
    </div>
  </section>
</main>

<!-- Status bar -->
<footer class="flex h-5 shrink-0 gap-1 border-t border-white pt-0.5">
  <div class="flex-1 border border-[#777] border-b-white border-r-white"></div>
  <svg class="size-[17px]" viewBox="0 0 17 17"><path d="M3 17L17 3M7 17L17 7M11 17l6-6" stroke="#777" stroke-width="1.500"/><path d="M5 17L17 5M9 17l8-8" stroke="#fff"/></svg>
</footer>
</div>
</body>
</html>
